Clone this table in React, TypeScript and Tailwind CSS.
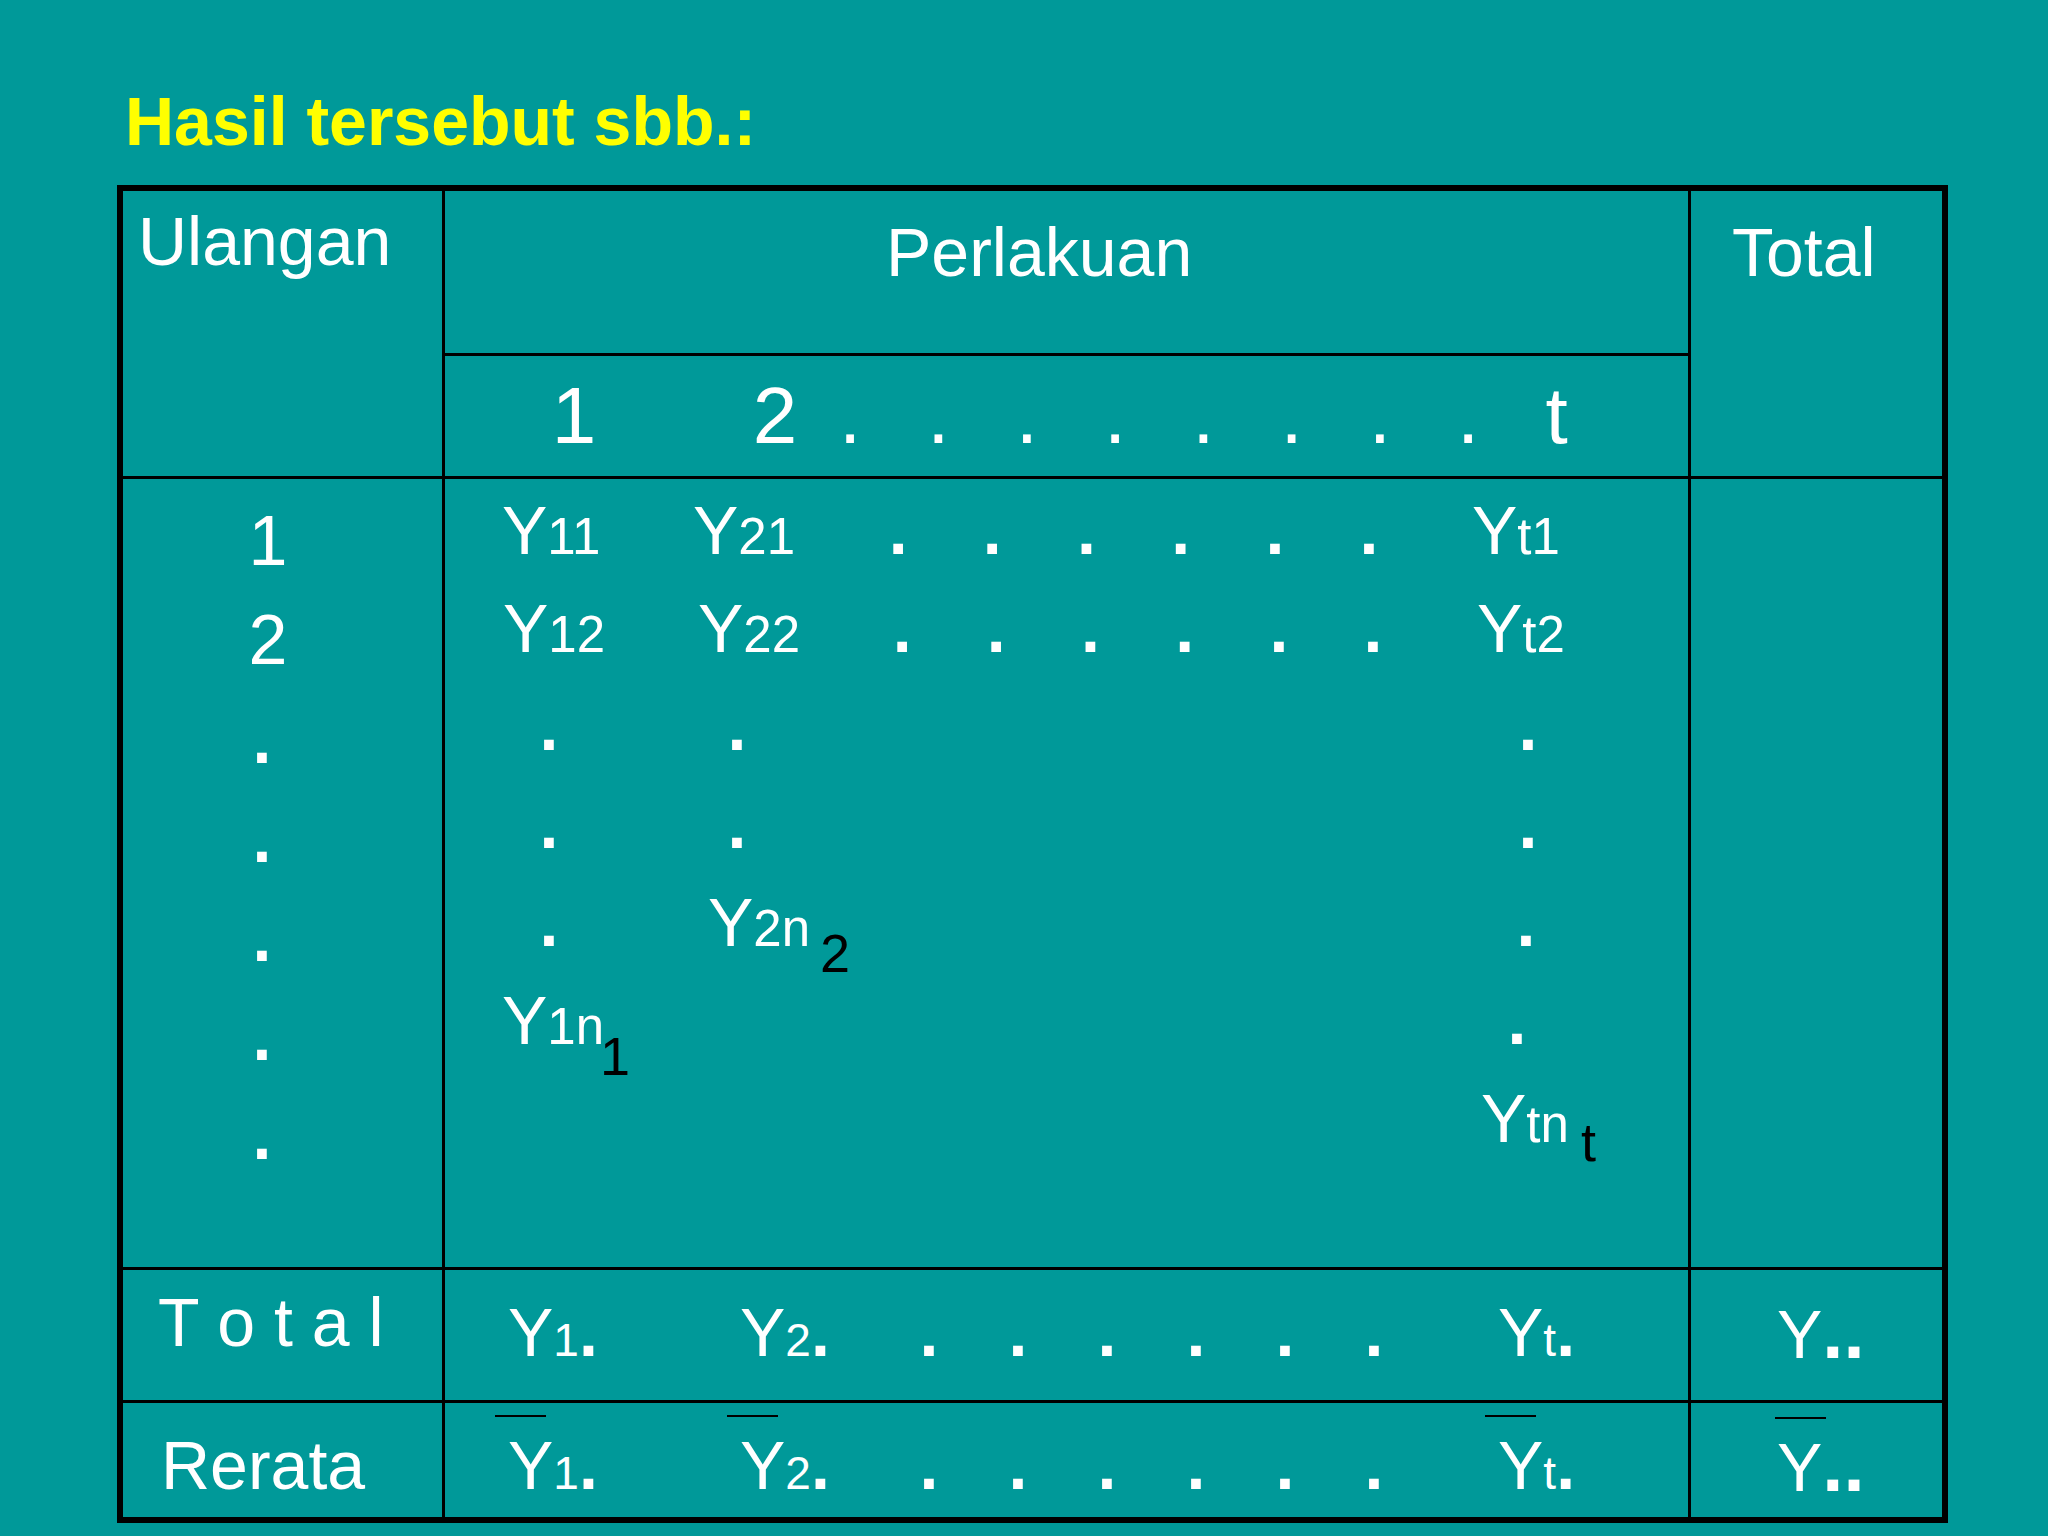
import React from 'react';

// subscript-sized digits / letters that sit on the main baseline
const Sm = ({ children }: { children: React.ReactNode }) => (
  <span className="text-[51px]">{children}</span>
);

// black index hanging under the baseline (n1, n2, nt)
const Low = ({ children, className }: { children: React.ReactNode; className: string }) => (
  <span className={`relative text-[54px] text-black ${className}`}>{children}</span>
);

const Dot = () => <span className="font-bold">.</span>;

// Y with a bar over it, used in the Rerata row
const BarY = ({ bar = 'left-[-13px]' }: { bar?: string }) => (
  <span className="relative">
    <span className={`absolute top-[-12px] h-[2px] w-[51px] bg-black ${bar}`} />
    Y
  </span>
);

const rowDots = [0, 1, 2, 3, 4, 5];
const headDots = [0, 1, 2, 3, 4, 5, 6, 7];
const ulangan = ['1', '2', '.', '.', '.', '.', '.'];

const App = () => {
  return (
    <div className="w-[2048px] h-[1536px] overflow-hidden bg-[#009999] font-['Liberation_Sans',Arial,sans-serif] text-white">
      <h1 className="pl-[125px] pt-[87px] text-[68px] leading-[68px] font-bold text-[#ffff00]">
        Hasil tersebut sbb.:
      </h1>

      <div className="ml-[117px] mt-[30px] grid h-[1338px] w-[1831px] grid-cols-[322px_1246px_251px] grid-rows-[288px_791px_133px_114px] border-[6px] border-black text-[68px] leading-[68px]">
        {/* header */}
        <div className="border-b-[3px] border-r-[3px] border-black pl-[15px] pt-[16px]">Ulangan</div>
        <div className="flex flex-col border-b-[3px] border-r-[3px] border-black">
          <div className="h-[165px] border-b-[3px] border-black pl-[441px] pt-[27px]">Perlakuan</div>
          <div className="flex pt-[20px] text-[80px] leading-[80px]">
            <span className="ml-[99px] w-[60px] text-center">1</span>
            <span className="ml-[141px] w-[60px] text-center">2</span>
            <span className="ml-[1px] flex">
              {headDots.map(i => (
                <span key={i} className="w-[88.3px] text-center">.</span>
              ))}
              <span className="w-[88.3px] text-center">t</span>
            </span>
          </div>
        </div>
        <div className="border-b-[3px] border-black pl-[41px] pt-[27px]">Total</div>

        {/* body */}
        <div className="flex flex-col border-b-[3px] border-r-[3px] border-black pt-[28px]">
          {ulangan.map((v, i) => (
            <div key={i} className={`h-[99px] text-center ${v === '.' ? 'w-[278px] font-bold' : 'w-[290px] text-[70px]'}`}>
              {v}
            </div>
          ))}
        </div>
        <div className="flex flex-col border-b-[3px] border-r-[3px] border-black pt-[17px]">
          <div className="flex h-[98px]">
            <span className="ml-[57px] w-[191px]">Y<Sm>11</Sm></span>
            <span className="w-[158px]">Y<Sm>21</Sm></span>
            {rowDots.map(i => (
              <span key={i} className="w-[94.2px] text-center"><Dot /></span>
            ))}
            <span className="ml-[55.8px]">Y<Sm>t1</Sm></span>
          </div>
          <div className="flex h-[98px]">
            <span className="ml-[58px] w-[195px]">Y<Sm>12</Sm></span>
            <span className="w-[157px]">Y<Sm>22</Sm></span>
            {rowDots.map(i => (
              <span key={i} className="w-[94.2px] text-center"><Dot /></span>
            ))}
            <span className="ml-[56.8px]">Y<Sm>t2</Sm></span>
          </div>
          <div className="flex h-[98px]">
            <span className="ml-[84px] w-[40px] text-center"><Dot /></span>
            <span className="ml-[148px] w-[40px] text-center"><Dot /></span>
            <span className="ml-[751px] w-[40px] text-center"><Dot /></span>
          </div>
          <div className="flex h-[98px]">
            <span className="ml-[84px] w-[40px] text-center"><Dot /></span>
            <span className="ml-[148px] w-[40px] text-center"><Dot /></span>
            <span className="ml-[751px] w-[40px] text-center"><Dot /></span>
          </div>
          <div className="flex h-[98px]">
            <span className="ml-[84px] w-[40px] text-center"><Dot /></span>
            <span className="ml-[139px] w-[200px]">
              Y<Sm>2n</Sm>
              <Low className="top-[26px] ml-[10px]">2</Low>
            </span>
            <span className="ml-[598px] w-[40px] text-center"><Dot /></span>
          </div>
          <div className="flex h-[98px]">
            <span className="ml-[57px] w-[200px]">
              Y<Sm>1n</Sm>
              <Low className="top-[31px] ml-[-4px]">1</Low>
            </span>
            <span className="ml-[795px] w-[40px] text-center"><Dot /></span>
          </div>
          <div className="flex h-[98px]">
            <span className="ml-[1036px]">
              Y<Sm>tn</Sm>
              <Low className="top-[19px] ml-[12px]">t</Low>
            </span>
          </div>
        </div>
        <div className="border-b-[3px] border-black" />

        {/* Total row */}
        <div className="border-b-[3px] border-r-[3px] border-black pl-[35px] pt-[18px]">T o t a l</div>
        <div className="flex border-b-[3px] border-r-[3px] border-black pt-[28px]">
          <span className="ml-[63px] w-[232px]">Y<span className="text-[46px]">1</span><Dot /></span>
          <span className="w-[144.5px]">Y<span className="text-[46px]">2</span><Dot /></span>
          {rowDots.map(i => (
            <span key={i} className="w-[89px] text-center"><Dot /></span>
          ))}
          <span className="ml-[79.5px]">Y<span className="text-[46px]">t</span><Dot /></span>
        </div>
        <div className="border-b-[3px] border-black pl-[86px] pt-[28px]">
          Y<span className="text-[76px] font-bold">..</span>
        </div>

        {/* Rerata row */}
        <div className="border-r-[3px] border-black pl-[38px] pt-[28px]">Rerata</div>
        <div className="flex border-r-[3px] border-black pt-[28px]">
          <span className="ml-[63px] w-[232px]"><BarY /><span className="text-[46px]">1</span><Dot /></span>
          <span className="w-[144.5px]"><BarY /><span className="text-[46px]">2</span><Dot /></span>
          {rowDots.map(i => (
            <span key={i} className="w-[89px] text-center"><Dot /></span>
          ))}
          <span className="ml-[79.5px]"><BarY /><span className="text-[46px]">t</span><Dot /></span>
        </div>
        <div className="pl-[86px] pt-[28px]">
          <BarY bar="left-[-2px]" /><span className="text-[76px] font-bold">..</span>
        </div>
      </div>
    </div>
  );
};

export default App;
